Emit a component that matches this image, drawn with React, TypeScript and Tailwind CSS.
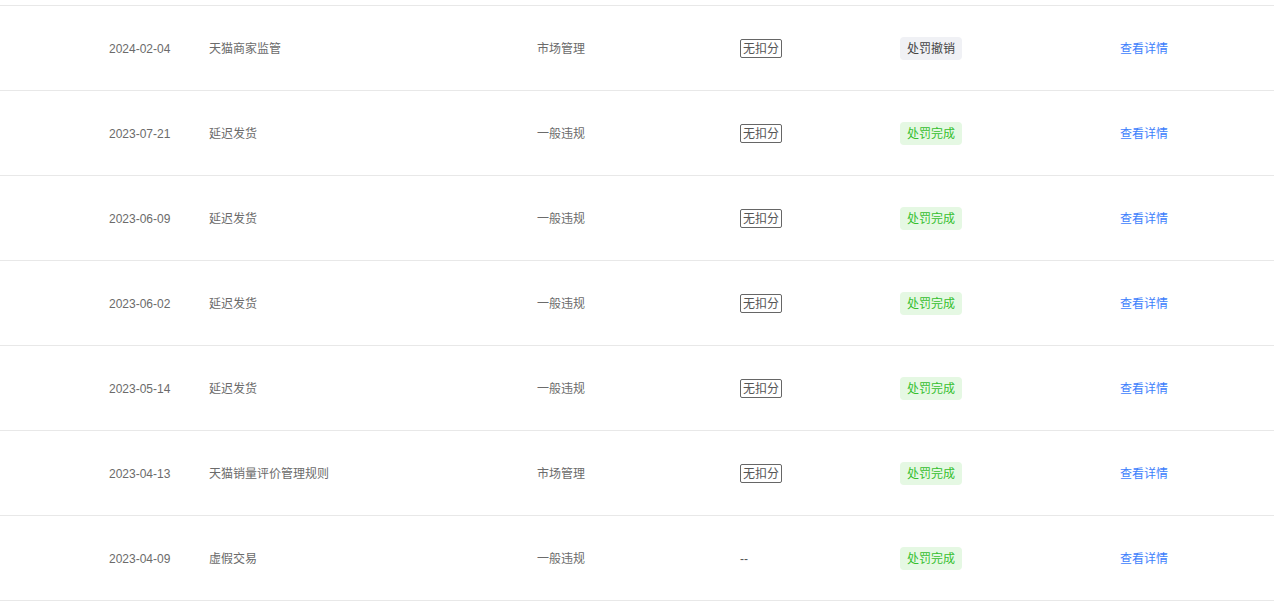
const rows = [
  { date: "2024-02-04", title: "天猫商家监管", type: "市场管理", score: true, status: "revoked" },
  { date: "2023-07-21", title: "延迟发货", type: "一般违规", score: true, status: "done" },
  { date: "2023-06-09", title: "延迟发货", type: "一般违规", score: true, status: "done" },
  { date: "2023-06-02", title: "延迟发货", type: "一般违规", score: true, status: "done" },
  { date: "2023-05-14", title: "延迟发货", type: "一般违规", score: true, status: "done" },
  { date: "2023-04-13", title: "天猫销量评价管理规则", type: "市场管理", score: true, status: "done" },
  { date: "2023-04-09", title: "虚假交易", type: "一般违规", score: false, status: "done" },
];

function StatusTag({ status }: { status: string }) {
  if (status === "revoked") {
    return (
      <span className="inline-flex h-[23px] items-center rounded-[4px] bg-[#f0f1f5] px-[7px] text-[#444]">
        处罚撤销
      </span>
    );
  }
  return (
    <span className="inline-flex h-[23px] items-center rounded-[4px] bg-[#e5f8e3] px-[7px] text-[#35bf2f]">
      处罚完成
    </span>
  );
}

export default function App() {
  return (
    <div
      className="h-[604px] w-full bg-white text-[12px] text-[#6b6b6b]"
      style={{ fontFamily: '"Liberation Sans", "Noto Sans CJK SC", sans-serif' }}
    >
      <div className="h-[6px] border-b border-[#e8e8e8]" />
      {rows.map((row, i) => (
        <div
          key={i}
          className="grid h-[85px] grid-cols-[100px_328px_203px_160px_220px_1fr] items-center border-b border-[#e8e8e8] pl-[109px] pt-[1px]"
        >
          <div>{row.date}</div>
          <div>{row.title}</div>
          <div>{row.type}</div>
          <div>
            {row.score ? (
              <span className="inline-flex h-[19px] items-center rounded-[2px] border border-[#666] px-[2px] leading-none text-[#555]">
                无扣分
              </span>
            ) : (
              <span className="text-[#555]">--</span>
            )}
          </div>
          <div>
            <StatusTag status={row.status} />
          </div>
          <div>
            <a className="cursor-pointer text-[#3d7efc]">查看详情</a>
          </div>
        </div>
      ))}
    </div>
  );
}
